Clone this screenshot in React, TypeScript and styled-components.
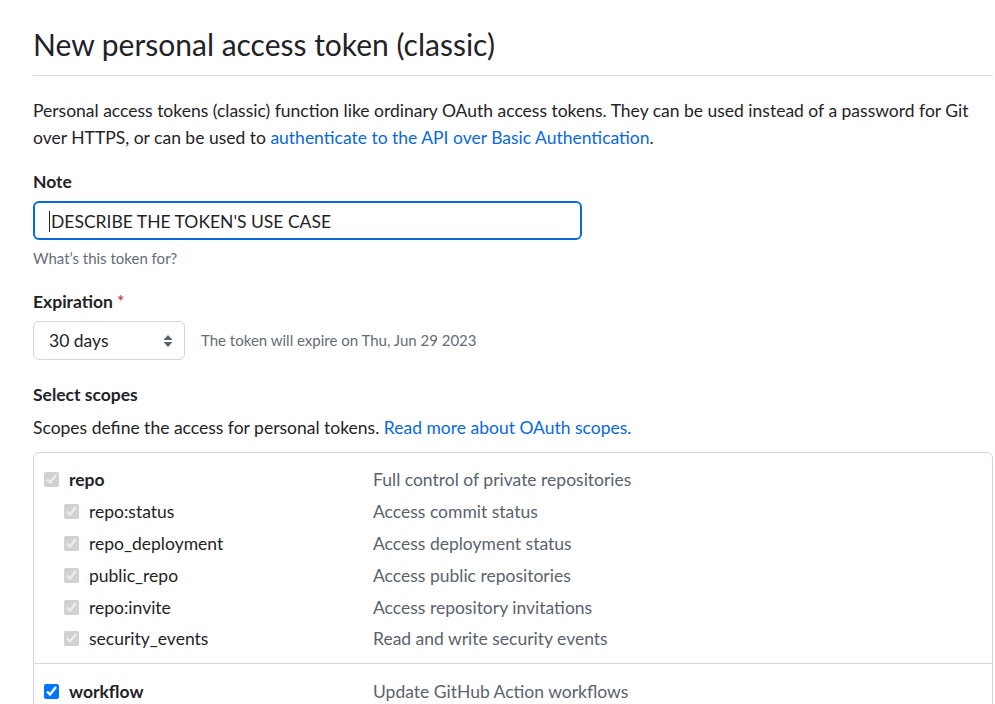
import React from "react";
import styled, { createGlobalStyle } from "styled-components";

const Global = createGlobalStyle`
  html, body { margin: 0; padding: 0; background: #ffffff; }
  body {
    font-family: Lato, "Open Sans", "Liberation Sans", sans-serif;
    color: #1f2328;
    font-size: 17.5px;
  }
  * { box-sizing: border-box; }
`;

const Page = styled.div`
  width: 960px;
  margin-left: 33px;
  padding-top: 26px;
`;

const Subhead = styled.div`
  border-bottom: 1px solid #d8dee4;
  padding-bottom: 11px;
`;

const Heading = styled.h1`
  margin: 0;
  font-size: 30px;
  line-height: 37.5px;
  font-weight: 400;
  color: #1f2328;
`;

const Intro = styled.p`
  margin: 21.5px 0 0;
  font-size: 17.5px;
  line-height: 27px;
`;

const Link = styled.a`
  color: #0969da;
  text-decoration: none;
`;

const Label = styled.div<{ $mt: number }>`
  margin-top: ${(p) => p.$mt}px;
  font-size: 17.5px;
  line-height: 27px;
  font-weight: 700;
`;

const Required = styled.span`
  color: #cf222e;
  font-weight: 400;
  margin-left: 4px;
`;

const NoteInput = styled.div`
  margin-top: 5.5px;
  width: 549px;
  height: 39px;
  border: 2px solid #0969da;
  border-radius: 6px;
  display: flex;
  align-items: center;
  padding: 2px 0 0 14px;
  font-size: 17.5px;
  color: #1f2328;
`;

const Caret = styled.span`
  display: inline-block;
  width: 1px;
  height: 21px;
  background: #1f2328;
  margin-right: 1px;
`;

const Help = styled.div`
  margin-top: 8px;
  font-size: 15px;
  line-height: 20px;
  color: #656d76;
`;

const SelectRow = styled.div`
  margin-top: 5.5px;
  display: flex;
  align-items: center;
  gap: 16px;
`;

const SelectBox = styled.div`
  width: 152px;
  height: 39.5px;
  border: 1px solid #d0d7de;
  border-radius: 6px;
  background: #ffffff;
  display: flex;
  align-items: center;
  justify-content: space-between;
  padding: 1px 10px 0 15px;
  font-size: 17.5px;
`;

const ExpireNote = styled.span`
  font-size: 15px;
  color: #656d76;
`;

const ScopesDesc = styled.div`
  margin: 6px 0 0;
  font-size: 17.5px;
  line-height: 27px;
`;

const ScopeBox = styled.div`
  margin-top: 11.5px;
  border: 1px solid #d0d7de;
  border-radius: 6px;
`;

const ScopeGroup = styled.div`
  padding: 11px 0 8px;
  & + & {
    border-top: 1px solid #d0d7de;
    padding-top: 12px;
  }
`;

const ScopeRow = styled.div`
  display: grid;
  grid-template-columns: 329px 1fr;
  height: 31.8px;
  align-items: center;
  padding-left: 10px;
`;

const ScopeName = styled.label<{ $child?: boolean }>`
  display: flex;
  align-items: center;
  gap: 10px;
  padding-left: ${(p) => (p.$child ? 20 : 0)}px;
  font-size: 17.5px;
  font-weight: ${(p) => (p.$child ? 400 : 700)};
  color: #1f2328;
`;

const Check = styled.input`
  width: 15px;
  height: 15px;
  margin: 0;
  flex: none;
`;

const ScopeInfo = styled.span`
  font-size: 17.5px;
  color: #59636e;
`;

const SelectArrows = () => (
  <svg width="12" height="16" viewBox="0 0 12 16">
    <path d="M6 2 L10.5 7 H1.5 Z" fill="#59636e" />
    <path d="M6 14 L10.5 9 H1.5 Z" fill="#59636e" />
  </svg>
);

const repoChildren = [
  ["repo:status", "Access commit status"],
  ["repo_deployment", "Access deployment status"],
  ["public_repo", "Access public repositories"],
  ["repo:invite", "Access repository invitations"],
  ["security_events", "Read and write security events"],
];

export default function App() {
  return (
    <>
      <Global />
      <Page>
        <Subhead>
          <Heading>New personal access token (classic)</Heading>
        </Subhead>
        <Intro>
          Personal access tokens (classic) function like ordinary OAuth access tokens. They can be used instead of a password for Git over HTTPS, or can be used to{" "}
          <Link href="#">authenticate to the API over Basic Authentication</Link>.
        </Intro>

        <Label $mt={17}>Note</Label>
        <NoteInput>
          <Caret />
          DESCRIBE THE TOKEN'S USE CASE
        </NoteInput>
        <Help>What’s this token for?</Help>

        <Label $mt={20.5}>
          Expiration<Required>*</Required>
        </Label>
        <SelectRow>
          <SelectBox>
            <span>30 days</span>
            <SelectArrows />
          </SelectBox>
          <ExpireNote>The token will expire on Thu, Jun 29 2023</ExpireNote>
        </SelectRow>

        <Label $mt={20.5}>Select scopes</Label>
        <ScopesDesc>
          Scopes define the access for personal tokens.{" "}
          <Link href="#">Read more about OAuth scopes.</Link>
        </ScopesDesc>

        <ScopeBox>
          <ScopeGroup>
            <ScopeRow>
              <ScopeName>
                <Check type="checkbox" checked disabled readOnly />
                repo
              </ScopeName>
              <ScopeInfo>Full control of private repositories</ScopeInfo>
            </ScopeRow>
            {repoChildren.map(([name, info]) => (
              <ScopeRow key={name}>
                <ScopeName $child>
                  <Check type="checkbox" checked disabled readOnly />
                  {name}
                </ScopeName>
                <ScopeInfo>{info}</ScopeInfo>
              </ScopeRow>
            ))}
          </ScopeGroup>
          <ScopeGroup>
            <ScopeRow>
              <ScopeName>
                <Check type="checkbox" checked readOnly />
                workflow
              </ScopeName>
              <ScopeInfo>Update GitHub Action workflows</ScopeInfo>
            </ScopeRow>
          </ScopeGroup>
        </ScopeBox>
      </Page>
    </>
  );
}
